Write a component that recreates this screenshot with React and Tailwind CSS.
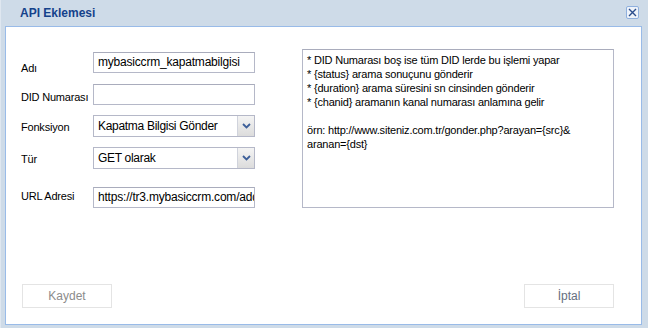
import React from "react";

const font = { fontFamily: "'Liberation Sans', Arial, sans-serif" };

function Chevron() {
  return (
    <svg width="9" height="6" viewBox="0 0 9 6">
      <path d="M1 1 L4.5 4.5 L8 1" fill="none" stroke="#3d5f99" strokeWidth="1.8" />
    </svg>
  );
}

function TextInput({ value }) {
  return (
    <div className="w-[162px] h-[21px] border border-[#b5b8c8] border-t-[#a9acbc] bg-white px-[4px] text-[12px] tracking-[-0.2px] leading-[19px] text-black overflow-hidden whitespace-nowrap">
      {value}
    </div>
  );
}

function Select({ value }) {
  return (
    <div className="w-[162px] h-[22px] border border-[#b5b8c8] bg-white flex text-[12px] tracking-[-0.3px] text-black">
      <div className="flex-1 px-[4px] leading-[20px] whitespace-nowrap overflow-hidden">{value}</div>
      <div className="w-[17px] border-l border-[#d0d3dc] bg-gradient-to-b from-[#f4f4f4] to-[#dcdcdc] flex items-center justify-center">
        <Chevron />
      </div>
    </div>
  );
}

const labelCls = "w-[72px] text-[11px] tracking-[-0.2px] leading-[14px] whitespace-nowrap text-black";

export default function App() {
  return (
    <div
      className="w-[648px] h-[328px] bg-[#cedbe8] flex flex-col pl-[4px] pr-[6px] pb-[3px] border-l border-[#dfe7f0]"
      style={font}
    >
      <div className="h-[26px] flex items-center justify-between pl-[15px] pr-[3px] shrink-0">
        <div className="text-[12px] font-bold text-[#15428b]">API Eklemesi</div>
        <div className="w-[13px] h-[13px] mt-[-1px] rounded-[2px] border border-[#8fb0de] bg-[#eef3fa] flex items-center justify-center">
          <svg width="9" height="9" viewBox="0 0 9 9">
            <path d="M1 1 L8 8 M8 1 L1 8" stroke="#2a4d8c" strokeWidth="1.4" />
          </svg>
        </div>
      </div>
      <div className="flex-1 border border-[#99bbe8] bg-white flex flex-col">
        <div className="flex pl-[15px] pt-[22px]">
          <div className="flex flex-col w-[234px] pt-[3px]">
            <div className="flex items-start h-[32px]">
              <div className={`${labelCls} pt-[9px]`}>Adı</div>
              <TextInput value="mybasiccrm_kapatmabilgisi" />
            </div>
            <div className="flex items-start h-[31px]">
              <div className={`${labelCls} pt-[6px]`}>DID Numarası</div>
              <TextInput value="" />
            </div>
            <div className="flex items-start h-[32px]">
              <div className={`${labelCls} pt-[5px]`}>Fonksiyon</div>
              <Select value="Kapatma Bilgisi Gönder" />
            </div>
            <div className="flex items-start h-[40px]">
              <div className={`${labelCls} pt-[5px]`}>Tür</div>
              <Select value="GET olarak" />
            </div>
            <div className="flex items-start">
              <div className={`${labelCls} pt-[2px]`}>URL Adresi</div>
              <TextInput value="https://tr3.mybasiccrm.com/addons/api" />
            </div>
          </div>
          <div className="ml-[47px] w-[312px] h-[159px] border border-[#b5b8c8] border-t-[#a9acbc] px-[4px] pt-[3px] text-[11px] tracking-[-0.2px] leading-[14px] text-black">
            <div>* DID Numarası boş ise tüm DID lerde bu işlemi yapar</div>
            <div>* {"{status}"} arama sonuçunu gönderir</div>
            <div>* {"{duration}"} arama süresini sn cinsinden gönderir</div>
            <div>* {"{chanid}"} aramanın kanal numarası anlamına gelir</div>
            <div className="h-[14px]"></div>
            <div>örn: http://www.siteniz.com.tr/gonder.php?arayan={"{src}"}&amp;</div>
            <div>aranan={"{dst}"}</div>
          </div>
        </div>
        <div className="flex-1"></div>
        <div className="flex justify-between pl-[16px] pr-[27px] pb-[16px]">
          <div className="w-[90px] h-[24px] border border-[#e4e4e4] bg-white flex items-center justify-center text-[12px] text-[#8c8c8c]">
            Kaydet
          </div>
          <div className="w-[90px] h-[24px] border border-[#e4e4e4] bg-white flex items-center justify-center text-[12px] text-[#666f80]">
            İptal
          </div>
        </div>
      </div>
    </div>
  );
}
